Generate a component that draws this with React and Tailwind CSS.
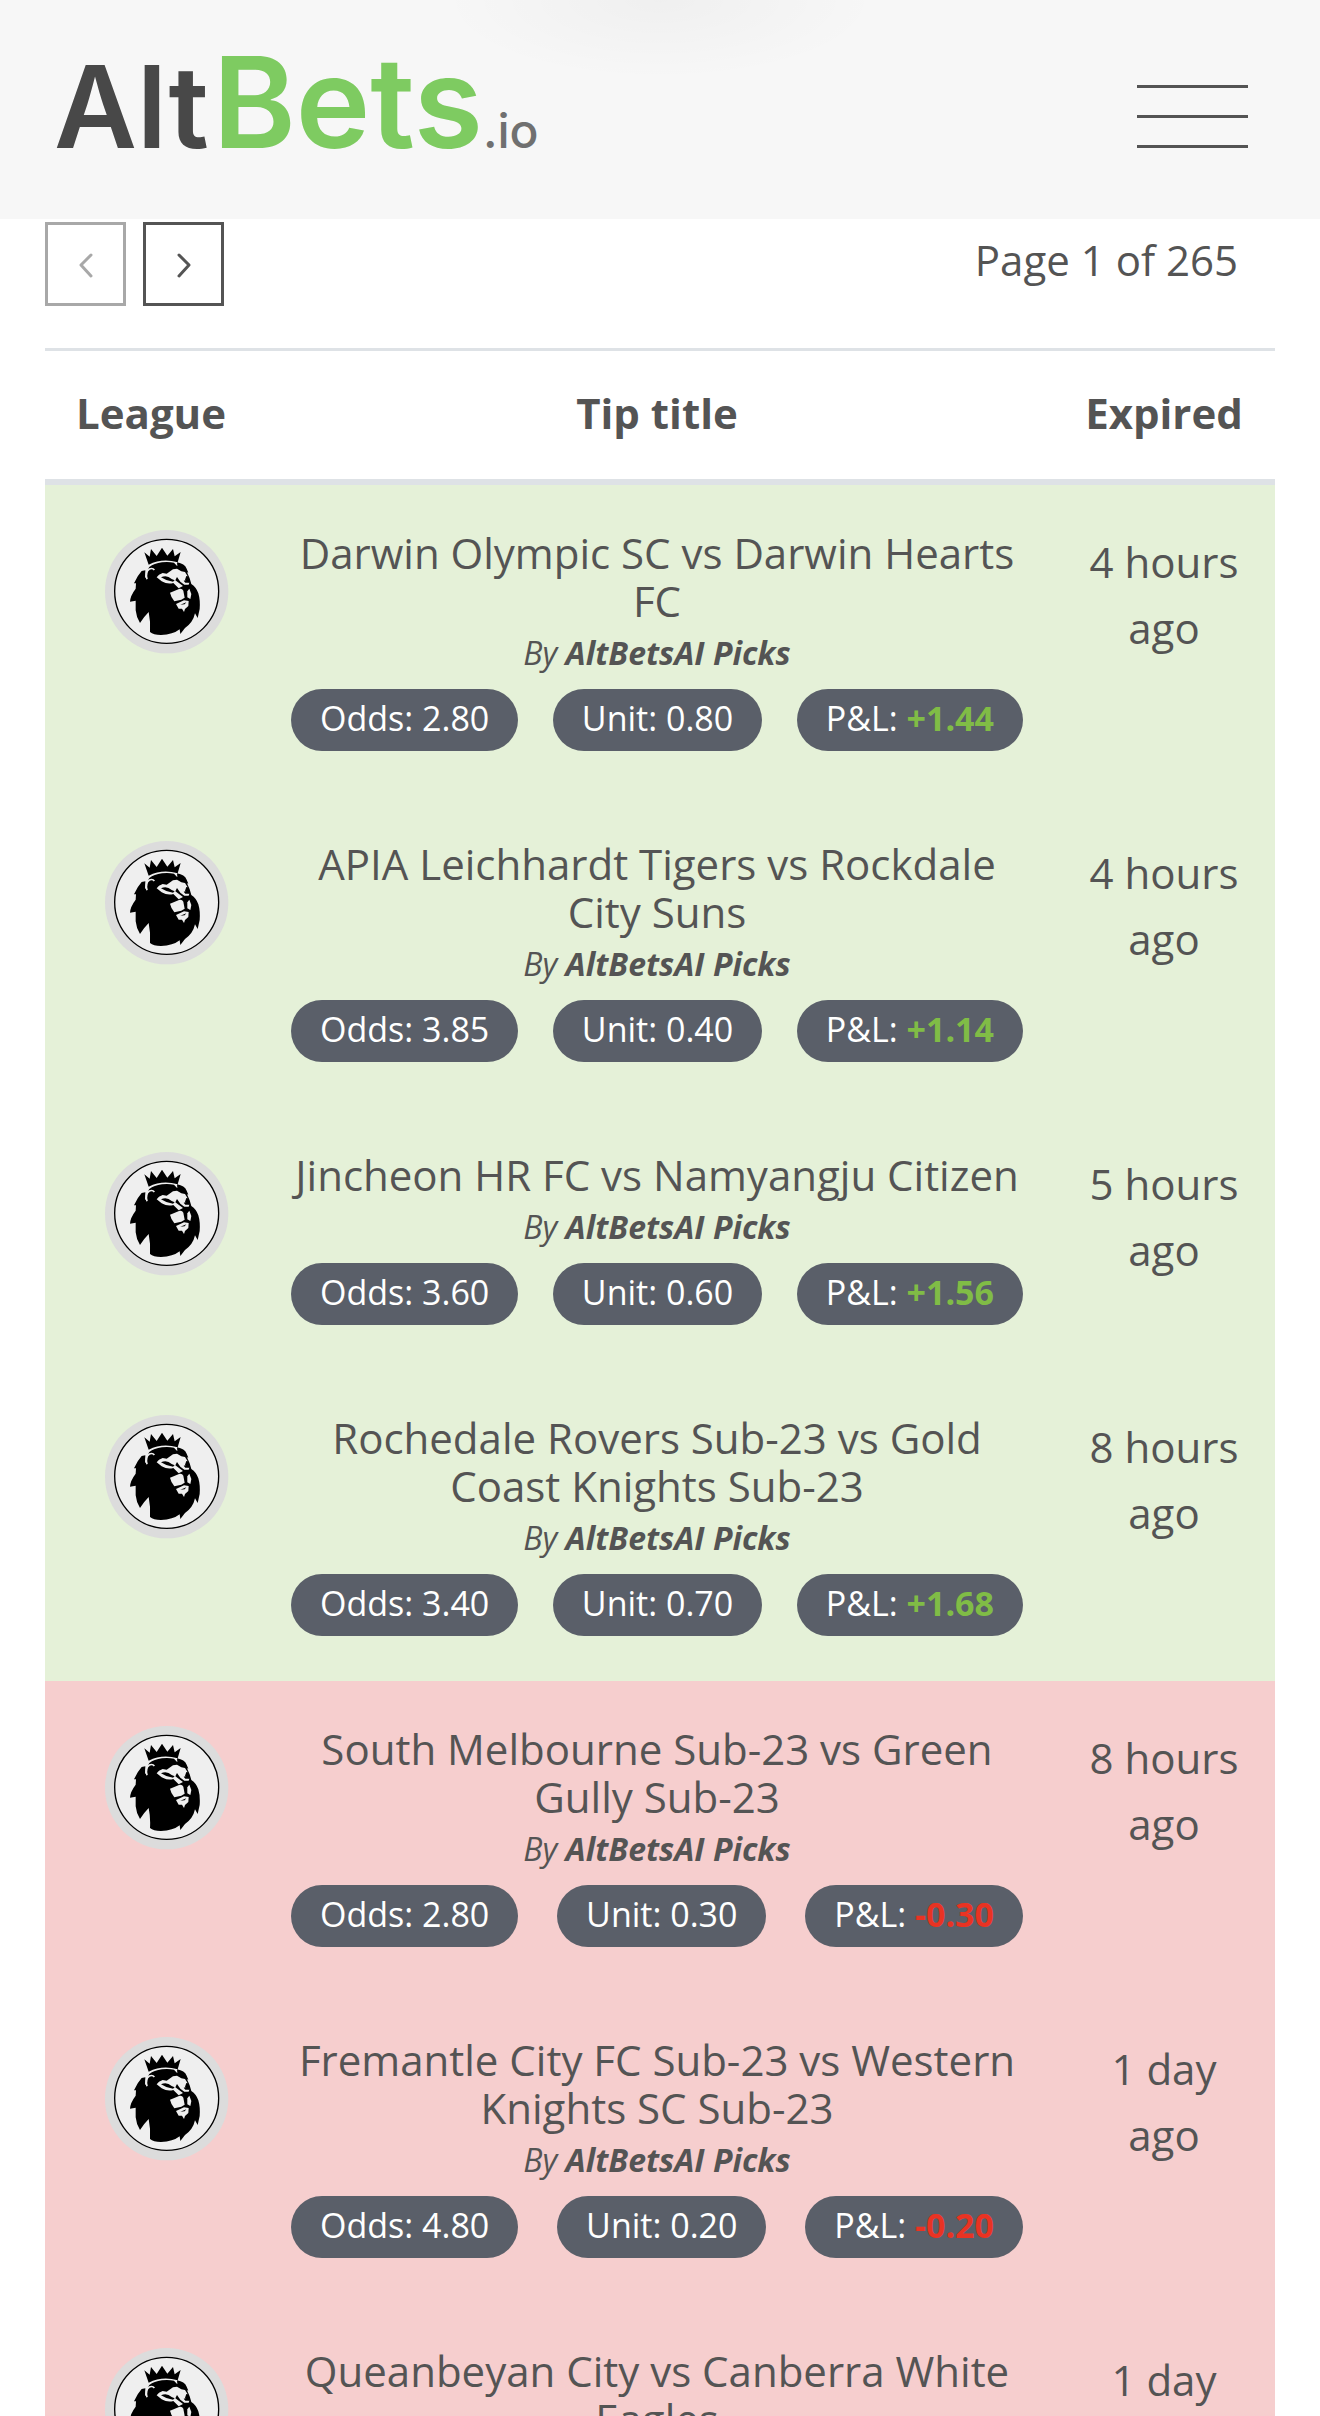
import React, { useState } from 'react';

const TOTAL_PAGES = 265;

const tips = [
    { id: 1, title: 'Darwin Olympic SC vs Darwin Hearts FC', odds: '2.80', unit: '0.80', pl: '+1.44', expired: '4 hours ago' },
    { id: 2, title: 'APIA Leichhardt Tigers vs Rockdale City Suns', odds: '3.85', unit: '0.40', pl: '+1.14', expired: '4 hours ago' },
    { id: 3, title: 'Jincheon HR FC vs Namyangju Citizen', odds: '3.60', unit: '0.60', pl: '+1.56', expired: '5 hours ago' },
    { id: 4, title: 'Rochedale Rovers Sub-23 vs Gold Coast Knights Sub-23', odds: '3.40', unit: '0.70', pl: '+1.68', expired: '8 hours ago' },
    { id: 5, title: 'South Melbourne Sub-23 vs Green Gully Sub-23', odds: '2.80', unit: '0.30', pl: '-0.30', expired: '8 hours ago' },
    { id: 6, title: 'Fremantle City FC Sub-23 vs Western Knights SC Sub-23', odds: '4.80', unit: '0.20', pl: '-0.20', expired: '1 day ago' },
    { id: 7, title: 'Queanbeyan City vs Canberra White Eagles', odds: '3.10', unit: '0.30', pl: '-0.30', expired: '1 day ago' },
];

const LeagueBadge = () => (
    <svg viewBox="0 0 372 372" className="w-[124px] h-[124px]" role="img" aria-label="League">
        <circle cx="185" cy="185" r="185" fill="#dcdcdc" />
        <circle cx="185" cy="184" r="156" fill="#efefef" stroke="#000" strokeWidth="4" />
        {/* Crown */}
        <path d="M118 67 L134 80 L138 57 L155 78 L171 53 L187 77 L204 57 L209 79 L227 66 L218 97 Q173 83 131 104 Z" />
        {/* Mane and head */}
        <path d="M133 111 Q147 100 171 97 Q190 95 207 98 L217 109 L216 97 Q239 101 245 116 L250 128 L246 127 L254 145 L259 162 Q274 172 280 190 Q286 210 284 237 L278 264 L270 250 Q264 278 240 294 L226 312 L224 298 Q204 314 168 315 Q145 315 135 306 Q137 275 131 246 Q118 259 105 279 Q94 262 92 241 L92 212 L75 215 Q76 197 92 176 L93 160 L87 160 Q97 137 110 123 L121 121 L120 145 L126 137 Q126 120 133 111 Z" />
        {/* Ear */}
        <path d="M126 148 Q120 126 133 117 Q143 113 148 120" fill="none" stroke="#efefef" strokeWidth="5" />
        {/* Brow and eyes */}
        <path d="M155 142 Q160 133 173 129 L185 131 L204 118 L216 116 L229 124 L240 126 L248 139 L244 138 L240 149 L253 158 L251 164 L238 164 L226 155 L216 141 L211 151 L234 168 L221 175 L205 159 Q188 164 170 154 Z" fill="#efefef" />
        <path d="M168 142 Q185 133 200 147 L209 151 L204 155 Q184 153 168 142 Z" />
        <path d="M236 152 L246 149 L254 158 L241 158 Z" />
        {/* Muzzle */}
        <path d="M195 188 L224 176 Q232 175 235 182 L239 203 L229 209 L208 214 Q198 202 195 188 Z" fill="#efefef" />
        <path d="M247 184 L253 176 L259 192 L256 207 L247 202 Z" fill="#efefef" />
        <path d="M213 222 L237 211 L251 213 L250 228 L240 237 L237 246 L231 236 L221 236 Z" fill="#efefef" />
        <path d="M226 224 L244 217 L239 223 Z" />
    </svg>
);

const Chevron = ({ direction }) => (
    <svg viewBox="0 0 14 28" className="w-3.5 h-7" fill="none" stroke="currentColor" strokeWidth="3" strokeLinecap="round" strokeLinejoin="round" aria-hidden="true">
        {direction === 'left' ? <path d="M12 5 L2 15 L12 26" /> : <path d="M2 5 L12 15 L2 26" />}
    </svg>
);

const Header = () => (
    <header className="relative h-[219px] bg-[#f7f7f7] pl-[54px] pr-[72px] flex justify-between items-start">
        {/* Soft shade along the top edge */}
        <div className="absolute inset-x-1/3 top-0 h-20 bg-[radial-gradient(ellipse_at_top,rgba(0,0,0,0.03),transparent_70%)]"></div>
        <a href="#home" className="flex items-baseline font-[Inter,sans-serif] font-semibold leading-[120px] mt-[42px] text-[114px] text-[#484848]">
            <span>Alt</span>
            <span className="ml-1 text-[126px] text-[#7ecb61]">Bets</span>
            <span className="text-[48px] font-medium text-[#707070]">.io</span>
        </a>
        <button type="button" aria-label="Menu" className="mt-[85px] w-[111px] flex flex-col gap-[27px]">
            <span className="h-[3px] w-full bg-[#545454]"></span>
            <span className="h-[3px] w-full bg-[#545454]"></span>
            <span className="h-[3px] w-full bg-[#545454]"></span>
        </button>
    </header>
);

const Pill = ({ children }) => (
    <span className="bg-[#5a5f69] text-white rounded-full px-[29px] h-[62px] leading-[58px] text-[34px] whitespace-nowrap">
        {children}
    </span>
);

const TipRow = ({ tip }) => {
    const won = tip.pl.startsWith('+');

    return (
        <tr className={`align-top ${won ? 'bg-[#e5f1d8]' : 'bg-[#f6cece]'}`}>
            <td className="pt-[45px] pl-[60px]">
                <LeagueBadge />
            </td>
            <td className="px-[30px] pt-11 pb-[45px] text-center">
                <p className="leading-[48px]">{tip.title}</p>
                <p className="text-[32px] leading-[56px] italic">
                    By <b>AltBetsAI Picks</b>
                </p>
                <div className="mt-2 flex justify-between">
                    <Pill>Odds: {tip.odds}</Pill>
                    <Pill>Unit: {tip.unit}</Pill>
                    <Pill>
                        P&amp;L: <b className={won ? 'text-[#80bc46]' : 'text-[#e93323]'}>{tip.pl}</b>
                    </Pill>
                </div>
            </td>
            <td className="px-8 pt-11 text-center leading-[66px]">{tip.expired}</td>
        </tr>
    );
};

const App = () => {
    const [page, setPage] = useState(1);

    return (
        <div className="min-h-screen bg-white font-['Open_Sans',sans-serif] text-[42px] text-[#545454]">
            <Header />

            <main className="px-[45px] pt-[3px]">
                {/* Pagination */}
                <div className="flex justify-between items-start pr-[37px] mb-[42px]">
                    <div className="flex gap-[17px]">
                        <button
                            type="button"
                            aria-label="Previous page"
                            disabled={page === 1}
                            onClick={() => setPage(page - 1)}
                            className="w-[81px] h-[84px] border-3 border-[#545454] flex items-center justify-center disabled:opacity-50"
                        >
                            <Chevron direction="left" />
                        </button>
                        <button
                            type="button"
                            aria-label="Next page"
                            disabled={page === TOTAL_PAGES}
                            onClick={() => setPage(page + 1)}
                            className="w-[81px] h-[84px] border-3 border-[#545454] flex items-center justify-center disabled:opacity-50"
                        >
                            <Chevron direction="right" />
                        </button>
                    </div>
                    <p className="pt-[5px] leading-[66px]">Page {page} of {TOTAL_PAGES}</p>
                </div>

                <table className="w-full table-fixed border-separate border-spacing-0">
                    <thead>
                        <tr className="leading-[66px]">
                            <th className="w-[216px] pr-1 pt-[29px] pb-[33px] border-t-3 border-b-6 border-[#dee2e6]">League</th>
                            <th className="pt-[29px] pb-[33px] border-t-3 border-b-6 border-[#dee2e6]">Tip title</th>
                            <th className="w-[222px] pt-[29px] pb-[33px] border-t-3 border-b-6 border-[#dee2e6]">Expired</th>
                        </tr>
                    </thead>
                    <tbody>
                        {tips.map((tip) => (
                            <TipRow key={tip.id} tip={tip} />
                        ))}
                    </tbody>
                </table>
            </main>
        </div>
    );
};

export default App;
